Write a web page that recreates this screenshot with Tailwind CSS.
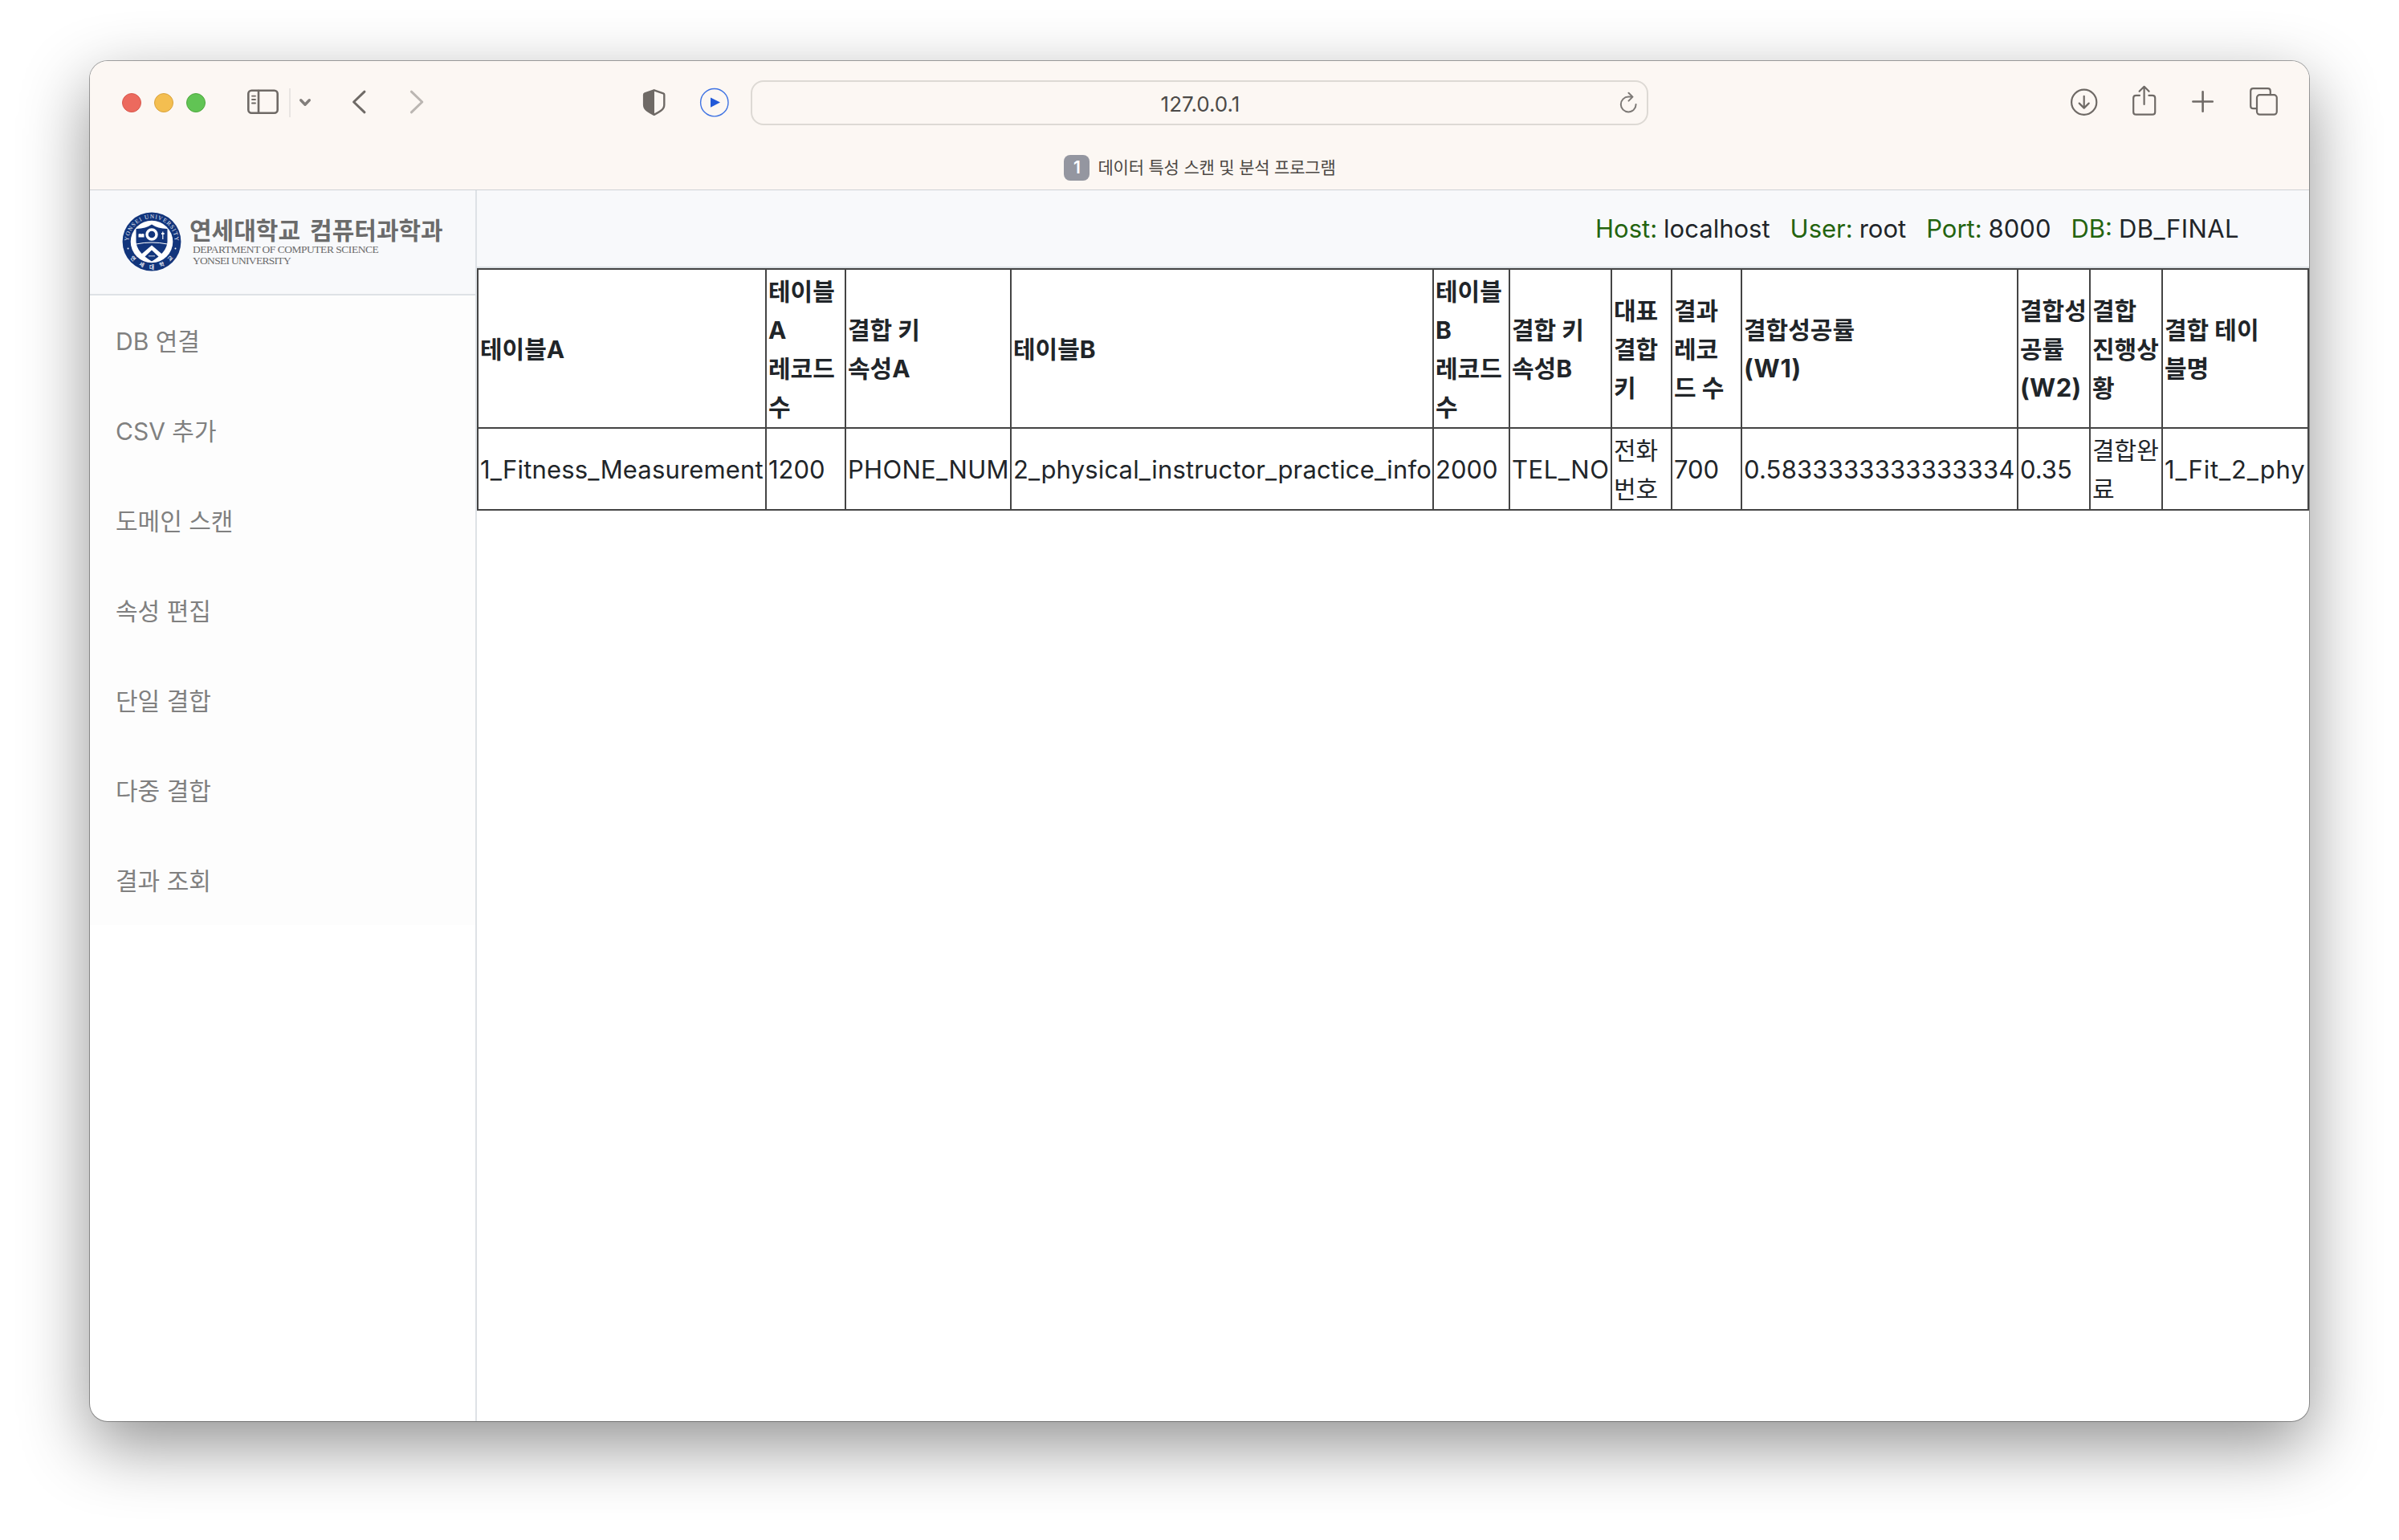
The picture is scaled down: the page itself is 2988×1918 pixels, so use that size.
<!DOCTYPE html>
<html lang="ko"><head><meta charset="utf-8"><title>데이터 특성 스캔 및 분석 프로그램</title>
<script src="https://cdn.jsdelivr.net/npm/@tailwindcss/browser@4"></script></head>
<body class="w-[2988px] h-[1918px] overflow-hidden bg-white pt-[76px] pl-[112px] font-['Inter','Noto_Sans_CJK_KR',sans-serif] text-[#212529]">
<div class="w-[2764px] h-[1694px] rounded-[22px] bg-white overflow-hidden flex flex-col shadow-[0_0_0_1px_#00000055,0_30px_84px_#0000006e]">
  <header class="h-[161px] shrink-0 bg-[#fcf7f3] border-b border-[#cfd2d5] text-[#6f6a66]">
    <div class="h-[104px] flex items-center">
      <div class="flex gap-4 ml-10">
        <i class="size-6 rounded-full bg-[#ec6a5e] border border-[#d9584d]"></i>
        <i class="size-6 rounded-full bg-[#f4be50] border border-[#d9a33b]"></i>
        <i class="size-6 rounded-full bg-[#61c454] border border-[#4fa73f]"></i>
      </div>
      <svg class="w-12 h-11 ml-12" viewBox="304 106 48 44" fill="none" stroke="currentColor" stroke-width="2.6" stroke-linecap="round"><rect x="309.3" y="112.8" width="36.4" height="27.9" rx="4"/><path d="M322 113v27.500"/><path stroke-width="1.900" d="M314 119.600h4M314 124h4M314 128.500h4"/></svg>
      <svg class="w-10 h-11 ml-1" viewBox="356 106 40 44" fill="none" stroke="currentColor" stroke-linecap="round" stroke-linejoin="round"><path stroke="#e9e5e2" stroke-width="2" stroke-linecap="butt" d="M361 110v36"/><path stroke="#827e7b" stroke-width="3.400" d="M374.700 124.800l5.300 5.500 5.300-5.500"/></svg>
      <svg class="w-6 h-11 ml-10" viewBox="436 106 24 44" fill="none" stroke="currentColor" stroke-width="3" stroke-linecap="round" stroke-linejoin="round"><path d="M454 114.200L440.600 127 454 139.800"/></svg>
      <svg class="w-6 h-11 ml-12" viewBox="508 106 24 44" fill="none" stroke="#bbb6b2" stroke-width="3" stroke-linecap="round" stroke-linejoin="round"><path d="M512.400 114.200L525.800 127l-13.400 12.800"/></svg>
      <svg class="w-10 h-11 ml-[264px]" viewBox="796 106 40 44" fill="none" stroke="currentColor" stroke-width="2.400" stroke-linejoin="round"><path d="M814.700 112.300l11.500 4.100q1.100.4 1.100 1.700v12.400q0 4.500-4 7.200-3.800 2.700-8.600 5.200-4.800-2.500-8.600-5.200-4-2.700-4-7.200v-12.400q0-1.300 1.100-1.700z"/><path fill="currentColor" stroke="none" d="M815 112.300v30.500q-5-2.400-8.900-5.100-4-2.700-4-7.200v-12.400q0-1.300 1.100-1.700z"/></svg>
      <svg class="w-10 h-11 ml-[34px]" viewBox="870 106 40 44"><circle cx="889.800" cy="127.700" r="17.200" fill="none" stroke="#3f73e3" stroke-width="1.400"/><path fill="#2259d8" d="M885 121.400l12 6.200-12 6.200z"/></svg>
      <div class="ml-[25px] w-[1118px] h-14 rounded-2xl border-2 border-[#ddd9d4] flex items-center relative text-[#4c4a48]">
        <span class="mx-auto pl-0.5 pt-0.5 text-[26px]">127.0.0.1</span>
        <svg class="absolute right-[7px] top-[5px] w-8 h-11" viewBox="2012 106 32 44" fill="none" stroke="#7d7976" stroke-width="2" stroke-linecap="round" stroke-linejoin="round"><path d="M2037.600 129a9.400 9.400 0 1 1-9.400-9.400h5M2028.500 114.800l5 4.800-5 5"/></svg>
      </div>
      <svg class="w-10 h-11 ml-[523px]" viewBox="2576 106 40 44" fill="none" stroke="currentColor" stroke-width="2.200" stroke-linecap="round" stroke-linejoin="round"><circle cx="2595.700" cy="127.200" r="15.600"/><path d="M2595.700 119.800v14M2589.700 128.600l6 6 6-6"/></svg>
      <svg class="w-10 h-11 ml-9" viewBox="2652 106 40 44" fill="none" stroke="currentColor" stroke-width="2.200" stroke-linecap="round" stroke-linejoin="round"><path d="M2665 118.800h-4.500q-3.300 0-3.300 3.300v17.300q0 3.300 3.300 3.300h20.400q3.300 0 3.300-3.300v-17.300q0-3.300-3.300-3.300h-4.500M2670.600 130v-21.500M2664.600 113.800l6-6 6 6"/></svg>
      <svg class="w-9 h-11 ml-8" viewBox="2724 106 36 44" fill="none" stroke="currentColor" stroke-width="2.600" stroke-linecap="round"><path d="M2731.400 126.500h24.400M2743.600 114.300v24.400"/></svg>
      <svg class="w-10 h-11 ml-10" viewBox="2800 106 40 44" fill="none" stroke="currentColor" stroke-width="2.200" stroke-linejoin="round"><rect x="2811" y="118.200" width="24.800" height="24.500" rx="3.600"/><path d="M2811 135.200h-4.500q-3.300 0-3.300-3.300v-18.400q0-3.300 3.300-3.300h18q3.300 0 3.300 3.300v4.700"/></svg>
    </div>
    <div class="h-[56px] pt-0.5 pl-px flex items-center justify-center gap-2.5 text-[#4c4844]">
      <span class="size-8 rounded-lg bg-[#9496a0] text-white text-[21px] font-semibold flex items-center justify-center">1</span>
      <span class="text-[21px] tracking-[-0.2px]">데이터 특성 스캔 및 분석 프로그램</span>
    </div>
  </header>
  <div class="flex flex-1">
    <aside class="w-[482px] border-r-2 border-[#dee2e6] shrink-0">
      <div class="h-[131px] bg-[#f8f9fb] border-b-2 border-[#dee2e6] flex pl-10 pt-[27px] text-[#6b6b6b]">
        <svg class="size-[74px]" viewBox="-37 -37 74 74">
          <circle r="36.400" fill="#12357c"/><circle r="26.300" fill="#fff"/>
          <path fill="#12357c" d="M0-21.500Q7-16.500 19.500-16V0Q19 13 0 24.500-19 13-19.500 0V-16Q-7-16.500 0-21.500z"/>
          <circle cy="-9" r="6" fill="none" stroke="#fff" stroke-width="3.400"/>
          <path stroke="#fff" stroke-width="1" fill="none" d="M-19.500 3Q0-1 19.500 3"/>
          <path fill="#fff" d="M-16.500-9.500q2-1 3.500 0 1.500-1 3.500 0v4h-7zM12-11h1.200v-1.500h1.200V-11h1.200v2h-1.200v6h-1.200v-6H12z"/>
          <path fill="#fff" d="M0 4.500L14 16.500l-4 3.500L0 10.500-10 20l-4-3.500z"/><path fill="#fff" d="M-4 17.500h8v.8h-8z"/>
          <circle cx="-29.500" cy="8.500" r="1" fill="#fff"/><circle cx="29.500" cy="8.500" r="1" fill="#fff"/>
          <path id="ring-top" fill="none" d="M-28.900 0A28.900 28.900 0 0 1 28.900 0"/><path id="ring-bottom" fill="none" d="M-33.500 0A33.500 33.500 0 0 0 33.500 0"/>
          <text class="font-['Liberation_Serif']" font-size="7.400" fill="#e8ecf5" text-anchor="middle"><textPath href="#ring-top" startOffset="50%" textLength="89">YONSEI UNIVERSITY</textPath></text>
          <text class="font-['Noto_Sans_CJK_KR']" font-size="6.600" font-weight="700" fill="#e8ecf5" text-anchor="middle"><textPath href="#ring-bottom" startOffset="50%" textLength="62">연세대학교</textPath></text>
        </svg>
        <div class="ml-[10px] flex flex-col whitespace-nowrap">
          <span class="mt-[6px] text-[30px] leading-[34px] font-bold [word-spacing:5px]">연세대학교 컴퓨터과학과</span>
          <span class="ml-1 text-[13.5px] leading-[14px] tracking-[-0.48px] font-['Liberation_Serif']">DEPARTMENT OF COMPUTER SCIENCE</span>
          <span class="ml-1 text-[13.5px] leading-[14px] tracking-[-0.7px] font-['Liberation_Serif']">YONSEI UNIVERSITY</span>
        </div>
      </div>
      <nav class="bg-[#fdfdfd] text-[#808080] text-[30px]">
        <a class="h-28 flex items-center pl-8 pt-0.5">DB 연결</a>
        <a class="h-28 flex items-center pl-8 pt-0.5">CSV 추가</a>
        <a class="h-28 flex items-center pl-8 pt-0.5">도메인 스캔</a>
        <a class="h-28 flex items-center pl-8 pt-0.5">속성 편집</a>
        <a class="h-28 flex items-center pl-8 pt-0.5">단일 결합</a>
        <a class="h-28 flex items-center pl-8 pt-0.5">다중 결합</a>
        <a class="h-28 flex items-center pl-8 pt-0.5">결과 조회</a>
      </nav>
    </aside>
    <main class="flex-1">
      <div class="h-[97px] bg-[#f8f9fb] border-b-2 border-[#dee2e6] flex items-center justify-end pt-0.5 pr-[87px] text-[31px]">
        <span class="text-[#24640f]">Host:</span><span class="ml-2">localhost</span>
        <span class="text-[#24640f] ml-[25px]">User:</span><span class="ml-2">root</span>
        <span class="text-[#24640f] ml-[25px]">Port:</span><span class="ml-2">8000</span>
        <span class="text-[#24640f] ml-[25px]">DB:</span><span class="ml-2 tracking-[0.4px]">DB_FINAL</span>
      </div>
      <table class="w-[2282px] table-fixed border-collapse whitespace-nowrap text-left text-[30px] leading-[48px] [&_th]:border-2 [&_td]:border-2 [&_th]:border-[#444] [&_td]:border-[#444] [&_th]:px-0.5 [&_td]:px-0.5 [&_th]:pt-[3px] [&_td]:pt-[3px] [&_th]:pb-px [&_td]:pb-px">
        <colgroup><col class="w-[359px]"><col class="w-[99px]"><col class="w-[206px]"><col class="w-[526px]"><col class="w-[95px]"><col class="w-[127px]"><col class="w-[75px]"><col class="w-[87px]"><col class="w-[344px]"><col class="w-[90px]"><col class="w-[90px]"><col class="w-[182px]"></colgroup>
        <tr><th>테이블A</th><th>테이블<br>A<br>레코드<br>수</th><th>결합 키<br>속성A</th><th>테이블B</th><th>테이블<br>B<br>레코드<br>수</th><th>결합 키<br>속성B</th><th>대표<br>결합<br>키</th><th>결과<br>레코<br>드 수</th><th>결합성공률<br><span class="text-[31px] tracking-[0.8px]">(W1)</span></th><th>결합성<br>공률<br><span class="text-[31px] tracking-[0.4px]">(W2)</span></th><th>결합<br>진행상<br>황</th><th>결합 테이<br>블명</th></tr>
        <tr class="text-[31px]"><td class="tracking-[0.16px]">1_Fitness_Measurement</td><td>1200</td><td class="tracking-[0.3px]">PHONE_NUM</td><td class="tracking-[0.17px]">2_physical_instructor_practice_info</td><td>2000</td><td class="tracking-[0.5px]">TEL_NO</td><td class="text-[30px]">전화<br>번호</td><td>700</td><td class="tracking-[0.18px]">0.5833333333333334</td><td>0.35</td><td class="text-[30px]">결합완<br>료</td><td class="tracking-[0.85px]">1_Fit_2_phy</td></tr>
      </table>
    </main>
  </div>
</div>
</body></html>
